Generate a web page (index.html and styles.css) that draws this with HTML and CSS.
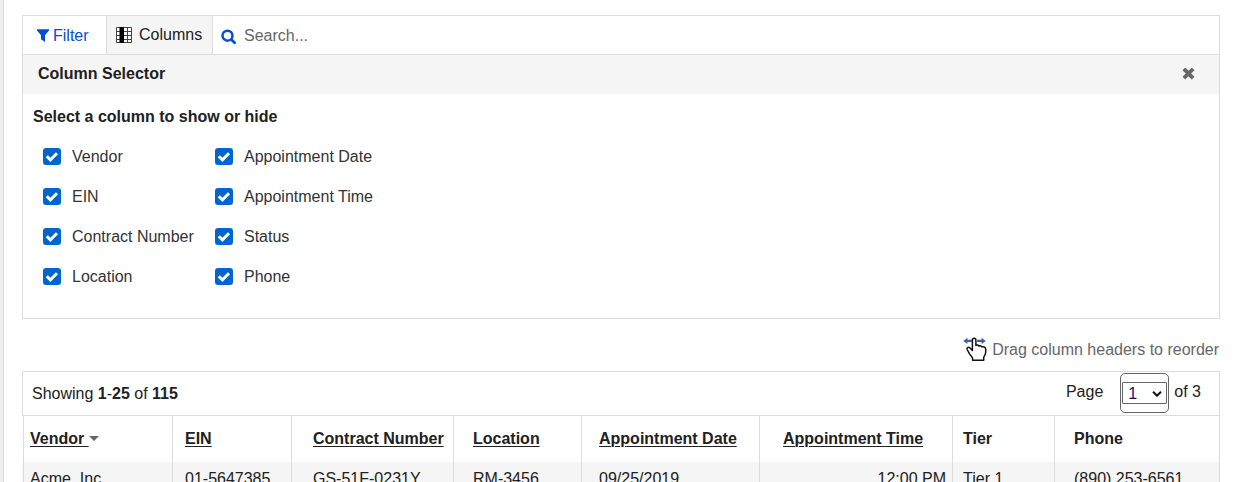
FILE: index.html
```html
<!DOCTYPE html>
<html lang="en">
<head>
<meta charset="utf-8">
<title>Vendors</title>
<link rel="stylesheet" href="styles.css">
</head>
<body>
<main class="page">
  <section class="panel">
    <div class="toolbar">
      <a class="tab filter"><svg class="funnel" width="12" height="13" viewBox="0 0 12 13"><path d="M0 .3h12v1.2L8 6.2V13L4 10.2v-4L0 1.5z" fill="#0050d0"/></svg>Filter</a>
      <a class="tab columns"><svg class="grid-icon" width="16" height="16" viewBox="0 0 16 16"><path d="M0 0h16v16H0z" fill="#fff"/><path d="M.5.5h15v15H.5zM.5 4.5h15M.5 8.5h15M.5 12.5h15M11.5 0v16" fill="none" stroke="#444"/><path d="M3.5 0H8v16H3.5z" fill="#000"/></svg>Columns</a>
      <label class="search"><svg width="16" height="16" viewBox="0 0 16 16"><circle cx="6.5" cy="6.7" r="5" fill="none" stroke="#0050d0" stroke-width="2.5"/><path d="M10.3 10.5l3.3 3.3" stroke="#0050d0" stroke-width="2.8" stroke-linecap="round"/></svg><span>Search...</span></label>
    </div>
    <header class="panel-head"><strong>Column Selector</strong><svg width="13" height="12" viewBox="0 0 13 12"><path d="M3.2 2.2l6.6 6.6M9.8 2.2L3.2 8.8" stroke="#666" stroke-width="3.8" stroke-linecap="square"/></svg></header>
    <div class="panel-body">
      <h2>Select a column to show or hide</h2>
      <div class="choices">
        <label class="choice"><span class="check"><svg viewBox="0 0 18 17"><path d="M3.8 8.2l3.6 3.6L14 5.3" /></svg></span><span class="name">Vendor</span></label>
        <label class="choice"><span class="check"><svg viewBox="0 0 18 17"><path d="M3.8 8.2l3.6 3.6L14 5.3" /></svg></span><span class="name">Appointment Date</span></label>
        <label class="choice"><span class="check"><svg viewBox="0 0 18 17"><path d="M3.8 8.2l3.6 3.6L14 5.3" /></svg></span><span class="name">EIN</span></label>
        <label class="choice"><span class="check"><svg viewBox="0 0 18 17"><path d="M3.8 8.2l3.6 3.6L14 5.3" /></svg></span><span class="name">Appointment Time</span></label>
        <label class="choice"><span class="check"><svg viewBox="0 0 18 17"><path d="M3.8 8.2l3.6 3.6L14 5.3" /></svg></span><span class="name">Contract Number</span></label>
        <label class="choice"><span class="check"><svg viewBox="0 0 18 17"><path d="M3.8 8.2l3.6 3.6L14 5.3" /></svg></span><span class="name">Status</span></label>
        <label class="choice"><span class="check"><svg viewBox="0 0 18 17"><path d="M3.8 8.2l3.6 3.6L14 5.3" /></svg></span><span class="name">Location</span></label>
        <label class="choice"><span class="check"><svg viewBox="0 0 18 17"><path d="M3.8 8.2l3.6 3.6L14 5.3" /></svg></span><span class="name">Phone</span></label>
      </div>
    </div>
  </section>

  <div class="hint">
    <svg width="25" height="25" viewBox="0 0 25 25"><path d="M.3 3.9L4.4.8v2h4.4V5H4.4v2zM22.7 3.9L18.6.8v2h-4.4V5h4.4v2z" fill="#3d60ad"/><path d="M9.4 13.5V3.2c0-2.6 3.5-2.6 3.5 0v5.2c1-.8 2.5-.5 2.9.6 1-.6 2.3-.2 2.7.8 1.9-.5 4.2.3 4.2 2.4v3c0 2.6-2 3.8-2 5.6v2.4H9.6v-1.8c0-1.4-2-2.8-3.4-5l-2-3.9c-.7-1.7 1.1-2.9 2.5-1.7z" fill="#fff" stroke="#111" stroke-width="1.5" stroke-linejoin="round"/></svg>
    <span>Drag column headers to reorder</span>
  </div>

  <section class="status">
    <p class="showing">Showing <b>1</b>-<b>25</b> of <b>115</b></p>
    <div class="pager"><span>Page</span><span class="select-frame"><span class="select">1<svg width="10" height="6" viewBox="0 0 10 6"><path d="M1 .8l4 3.9L9 .8" fill="none" stroke="#111" stroke-width="2"/></svg></span></span><span>of 3</span></div>
  </section>

  <section class="table">
    <div class="row head">
      <div class="cell c1"><u>Vendor </u><i class="caret"></i></div>
      <div class="cell c2"><u>EIN</u></div>
      <div class="cell c3"><u>Contract Number</u></div>
      <div class="cell c4"><u>Location</u></div>
      <div class="cell c5"><u>Appointment Date</u></div>
      <div class="cell c6"><u>Appointment Time</u></div>
      <div class="cell c7">Tier</div>
      <div class="cell c8">Phone</div>
    </div>
    <div class="row data">
      <div class="cell c1">Acme, Inc.</div>
      <div class="cell c2">01-5647385</div>
      <div class="cell c3">GS-51F-0231Y</div>
      <div class="cell c4">RM-3456</div>
      <div class="cell c5">09/25/2019</div>
      <div class="cell time">12:00 PM</div>
      <div class="cell c7">Tier 1</div>
      <div class="cell c8">(890) 253-6561</div>
    </div>
  </section>
</main>
</body>
</html>
```
FILE: styles.css
```css
* { box-sizing: border-box; }
html { height: 100%; overflow: hidden; }
body {
  margin: 0;
  height: 100%;
  overflow: hidden;
  padding-left: 3px;
  background: #efefef;
  color: #212121;
  font: 16px/20px "Liberation Sans", Arial, sans-serif;
}
svg { display: block; flex: none; }
.page {
  height: 482px;
  overflow: hidden;
  padding: 15px 24px 0 18px;
  border-left: 1px solid #dcdcdc;
  background: #fff;
}
.panel {
  width: 1198px;
  height: 304px;
  border: 1px solid #dcdcdc;
}
.toolbar {
  display: flex;
  height: 39px;
  border-bottom: 1px solid #dcdcdc;
}
.tab {
  display: flex;
  align-items: center;
  border-right: 1px solid #dcdcdc;
}
.filter { width: 84px; padding: 1px 0 0 14px; gap: 4px; color: #0050d0; }
.columns { width: 106px; padding-left: 9px; gap: 7px; background: #f5f5f5; }
.search { display: flex; align-items: center; gap: 7px; padding: 2px 0 0 8px; color: #666; }
.search svg { margin-top: 2px; }
.panel-head {
  display: flex;
  align-items: center;
  justify-content: space-between;
  height: 39px;
  padding: 0 24px 2px 15px;
  background: #f5f5f5;
}
.panel-body { padding: 13px 10px 0; }
h2 { margin: 0; font-size: 16px; line-height: 20px; }
.choices {
  display: grid;
  grid-template-columns: 172px 200px;
  grid-auto-rows: 40px;
  padding: 9px 0 0 10px;
}
.choice { display: flex; align-items: center; gap: 11px; color: #333; }
.name { padding-top: 2px; }
.check { width: 18px; height: 17px; border-radius: 3px; background: #0066cc; }
.check path { fill: none; stroke: #fff; stroke-width: 3; }
.hint {
  display: flex;
  justify-content: flex-end;
  align-items: center;
  width: 1197px;
  height: 52px;
  gap: 4px;
  padding-top: 10px;
  color: #666;
}
.hint svg { margin-top: -2px; }
.status {
  display: flex;
  justify-content: space-between;
  width: 1198px;
  height: 45px;
  padding: 1px 18px 0 9px;
  border: 1px solid #dcdcdc;
}
.showing { margin: 11px 0 0; }
.pager { display: flex; line-height: 38px; }
.select-frame {
  width: 49px;
  height: 40px;
  margin: 0 5px 0 17px;
  padding: 8px 1px 0;
  border: 1px solid #666;
  border-radius: 5px;
}
.select {
  display: flex;
  align-items: center;
  justify-content: space-between;
  height: 22px;
  padding: 1px 4px 0 5px;
  border: 1px solid #666;
  border-radius: 1px;
  line-height: 20px;
  color: #10106a;
}
.table { width: 1198px; }
.row {
  display: grid;
  grid-template-columns: 149px 119px 162px 128px 178px 193px 102px 166px;
  padding-left: 1px;
}
.head { height: 46px; font-weight: bold; }
.data { height: 46px; background: #f5f5f5; }
.cell {
  padding-top: 13px;
  border-left: 1px solid #dcdcdc;
  white-space: pre;
}
.data .cell { padding-top: 7px; }
.cell:last-child { border-right: 1px solid #dcdcdc; }
.c1 { padding-left: 6px; }
.c2 { padding-left: 12px; }
.c3 { padding-left: 21px; }
.c4 { padding-left: 19px; }
.c5 { padding-left: 17px; }
.c6 { padding-left: 23px; }
.c7 { padding-left: 10px; }
.c8 { padding-left: 19px; }
.time { padding-right: 6px; text-align: right; }
u { text-decoration-thickness: 1px; text-underline-offset: 2px; }
.caret {
  display: inline-block;
  border: 5px solid transparent;
  border-top-color: #666;
  border-bottom: 0;
  vertical-align: 3px;
}
```
